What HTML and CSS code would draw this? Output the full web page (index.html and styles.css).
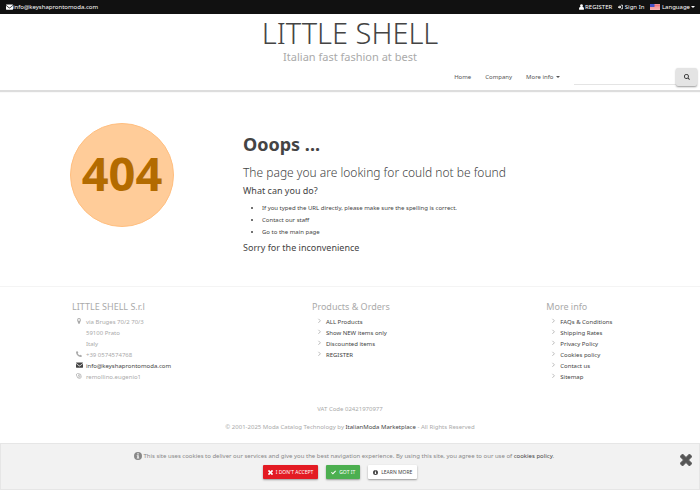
FILE: index.html
```html
<!DOCTYPE html>
<html lang="en">
<head>
    <meta charset="UTF-8">
    <meta name="viewport" content="width=device-width, initial-scale=1.0">
    <title>LITTLE SHELL - Page not found</title>
    <link rel="stylesheet" href="styles.css">
</head>
<body>
    <!-- shared icons -->
    <svg class="sprite" aria-hidden="true">
        <symbol id="envelope" viewBox="0 0 16 12"><path d="M1 0h14q1 0 1 1.200L8 7.500 0 1.200Q0 0 1 0zM0 3.200l8 6 8-6V11q0 1-1 1H1q-1 0-1-1z"/></symbol>
        <symbol id="user" viewBox="0 0 14 16"><path d="M7 0a4 4 0 0 1 2.600 7C12.500 7.500 14 10 14 13.500q0 2.500-2 2.500H2q-2 0-2-2.500C0 10 1.500 7.500 4.400 7A4 4 0 0 1 7 0z"/></symbol>
        <symbol id="signin" viewBox="0 0 16 14"><path d="M0 5h5V1.500L11 7l-6 5.500V9H0zM9 0h4q3 0 3 3v8q0 3-3 3H9v-2h4q1 0 1-1V3q0-1-1-1H9z"/></symbol>
        <symbol id="search" viewBox="0 0 16 16"><path fill-rule="evenodd" d="M6.500 0a6.500 6.500 0 0 1 5.300 10.200l4 4-1.700 1.700-4-4A6.500 6.500 0 1 1 6.500 0zm0 2.300a4.200 4.200 0 1 0 0 8.400 4.200 4.200 0 0 0 0-8.400z"/></symbol>
        <symbol id="marker" viewBox="0 0 10 16"><path fill-rule="evenodd" d="M5 0a5 5 0 0 1 5 5c0 2-1 3.500-4 11H4C1 8.500 0 7 0 5a5 5 0 0 1 5-5zm0 2.500a2.500 2.500 0 1 0 0 5 2.500 2.500 0 0 0 0-5z"/></symbol>
        <symbol id="phone" viewBox="0 0 14 14"><path d="M3 0l2.500 4L4 6q1.500 3 4 4l2-1.500 4 2.500q0 3-3.500 3C5 13 1 9 0 3.500Q0 0 3 0z"/></symbol>
        <symbol id="skype" viewBox="0 0 16 16"><path fill="none" stroke="currentColor" stroke-width="2" d="M2.500 8.500A4 4 0 0 1 7.500 2a6 6 0 0 1 6 6.500A4 4 0 0 1 8.500 14a6 6 0 0 1-6-5.500zM10.500 5.800Q8 4 6 5.500c-1 2 4.500 2 4.500 4C10 12 7 11.500 5.500 10"/></symbol>
        <symbol id="angle" viewBox="-3 -1 12 15"><path fill="none" stroke="currentColor" stroke-width="2" d="M1.500 1l5 5-5 5"/></symbol>
        <symbol id="info" viewBox="0 0 16 16"><path fill-rule="evenodd" d="M8 0a8 8 0 1 1 0 16A8 8 0 0 1 8 0zM6.500 2.500v2.500h3V2.500zM5.500 6.500v1.500h1v3.500h-1V13h5v-1.500h-1v-5z"/></symbol>
        <symbol id="times" viewBox="0 0 14 14"><path d="M3 0l4 4 4-4 3 3-4 4 4 4-3 3-4-4-4 4-3-3 4-4-4-4z" stroke="currentColor" stroke-linejoin="round"/></symbol>
        <symbol id="check" viewBox="0 0 16 13"><path d="M2.200 4.500L6 8.200 13.800 0 16 2.300 6 13 0 6.800z"/></symbol>
    </svg>

    <div class="topbar">
        <a class="topbar-mail" href="#"><svg class="icon icon-wide"><use href="#envelope"/></svg>info@keyshaprontomoda.com</a>
        <nav class="topbar-links">
            <a href="#"><svg class="icon icon-small"><use href="#user"/></svg> REGISTER</a>
            <a href="#"><svg class="icon icon-small"><use href="#signin"/></svg> Sign In</a>
            <a href="#">
                <svg class="flag" viewBox="0 0 20 12"><path fill="#fff" d="M0 0h20v12H0z"/><path stroke="#e8444e" stroke-width="1.500" d="M0 .6h20M0 3h20M0 5.400h20M0 7.800h20M0 10.200h20"/><path fill="#4450c8" d="M0 0h9v6H0z"/></svg>
                Language<span class="caret"></span>
            </a>
        </nav>
    </div>

    <header class="header">
        <h1 class="brand">LITTLE SHELL</h1>
        <p class="tagline">Italian fast fashion at best</p>
        <div class="navbar">
            <nav class="menu">
                <a href="#">Home</a>
                <a href="#">Company</a>
                <a href="#">More info <span class="caret"></span></a>
            </nav>
            <form class="search">
                <input type="text" class="search-input" aria-label="Search">
                <button type="button" class="search-button" aria-label="Search"><svg class="icon"><use href="#search"/></svg></button>
            </form>
        </div>
    </header>

    <main class="error">
        <div class="error-code">404</div>
        <div class="error-text">
            <h2>Ooops ...</h2>
            <h3>The page you are looking for could not be found</h3>
            <h4>What can you do?</h4>
            <ul>
                <li>If you typed the URL directly, please make sure the spelling is correct.</li>
                <li>Contact our staff</li>
                <li>Go to the main page</li>
            </ul>
            <h4>Sorry for the inconvenience</h4>
        </div>
    </main>

    <footer class="footer">
        <div class="footer-columns">
            <section>
                <h4>LITTLE SHELL S.r.l</h4>
                <ul>
                    <li><svg class="icon"><use href="#marker"/></svg>via Bruges 70/2 70/3<br>59100 Prato<br>Italy</li>
                    <li><svg class="icon"><use href="#phone"/></svg>+39 0574574768</li>
                    <li class="dark"><svg class="icon icon-wide"><use href="#envelope"/></svg><a href="#">info@keyshaprontomoda.com</a></li>
                    <li><svg class="icon"><use href="#skype"/></svg>remollino.eugenio1</li>
                </ul>
            </section>
            <section>
                <h4>Products &amp; Orders</h4>
                <ul>
                    <li><svg class="icon"><use href="#angle"/></svg><a href="#">ALL Products</a></li>
                    <li><svg class="icon"><use href="#angle"/></svg><a href="#">Show NEW items only</a></li>
                    <li><svg class="icon"><use href="#angle"/></svg><a href="#">Discounted items</a></li>
                    <li><svg class="icon"><use href="#angle"/></svg><a href="#">REGISTER</a></li>
                </ul>
            </section>
            <section>
                <h4>More info</h4>
                <ul>
                    <li><svg class="icon"><use href="#angle"/></svg><a href="#">FAQs &amp; Conditions</a></li>
                    <li><svg class="icon"><use href="#angle"/></svg><a href="#">Shipping Rates</a></li>
                    <li><svg class="icon"><use href="#angle"/></svg><a href="#">Privacy Policy</a></li>
                    <li><svg class="icon"><use href="#angle"/></svg><a href="#">Cookies policy</a></li>
                    <li><svg class="icon"><use href="#angle"/></svg><a href="#">Contact us</a></li>
                    <li><svg class="icon"><use href="#angle"/></svg><a href="#">Sitemap</a></li>
                </ul>
            </section>
        </div>
        <p>VAT Code 02421970977</p>
        <p>© 2001-2025 Moda Catalog Technology by <a href="#">ItalianModa Marketplace</a> - All Rights Reserved</p>
    </footer>

    <div class="cookies">
        <div class="cookies-body">
            <p><svg class="icon icon-info"><use href="#info"/></svg> This site uses cookies to deliver our services and give you the best navigation experience. By using this site, you agree to our use of <a href="#">cookies policy</a>.</p>
            <div class="cookies-buttons">
                <button type="button" class="btn btn-red"><svg class="icon"><use href="#times"/></svg>I DON'T ACCEPT</button>
                <button type="button" class="btn btn-green"><svg class="icon"><use href="#check"/></svg>GOT IT</button>
                <button type="button" class="btn"><svg class="icon"><use href="#info"/></svg>LEARN MORE</button>
            </div>
        </div>
        <button type="button" class="cookies-close" aria-label="Close"><svg><use href="#times"/></svg></button>
    </div>
</body>
</html>
```
FILE: styles.css
```css
* {
    box-sizing: border-box;
}
body {
    margin: 0;
    background-color: #fff;
    color: #444;
    font-family: "Noto Sans", sans-serif;
    font-size: 6px;
    line-height: 11px;
}
h1, h2, h3, h4, p, ul {
    margin: 0;
    padding: 0;
    font-weight: 400;
}
a {
    color: #444;
    text-decoration: none;
}
button {
    border: none;
    padding: 0;
    font-family: inherit;
    cursor: pointer;
}
.sprite {
    display: none;
}
.icon {
    width: 6px;
    height: 6px;
    fill: currentColor;
    vertical-align: -1px;
}
.icon-wide {
    width: 7px;
}
.icon-small {
    width: 5px;
}
.caret {
    display: inline-block;
    margin-left: 1px;
    border: 2px solid transparent;
    border-top-color: currentColor;
    border-bottom: none;
    vertical-align: 1px;
}

/* top bar */
.topbar {
    display: flex;
    justify-content: space-between;
    height: 14px;
    padding: 0 5px 0 6px;
    background-color: #111;
    line-height: 14px;
}
.topbar a {
    color: #fff;
}
.topbar-links {
    display: flex;
    gap: 6px;
}
.flag {
    width: 10px;
    height: 6px;
    vertical-align: -1px;
}

/* header */
.header {
    border-bottom: 1px solid #ddd;
    box-shadow: 0 1px 1px #ddd;
    text-align: center;
}
.brand {
    font-size: 29px;
    line-height: 37px;
    font-weight: 300;
}
.tagline {
    color: #aaa;
    font-size: 11px;
    line-height: 12px;
}
.navbar {
    display: flex;
    justify-content: flex-end;
    align-items: center;
    gap: 14px;
    padding: 5px 3px 4px;
}
.menu {
    display: flex;
    gap: 14px;
}
.menu a {
    color: #555;
}
.search {
    display: flex;
}
.search-input {
    width: 102px;
    height: 17px;
    border: none;
    border-bottom: 1px solid #e4e4e4;
    outline: none;
}
.search-button {
    display: flex;
    justify-content: center;
    align-items: center;
    width: 21px;
    height: 18px;
    border-radius: 2px;
    background-color: #e4e4e4;
    box-shadow: 0 1px 2px #999;
    color: #333;
}

/* error message */
.error {
    display: flex;
    align-items: flex-start;
    gap: 69px;
    padding: 32px 10% 30px;
    border-bottom: 1px solid #f4f4f4;
}
.error-code {
    flex: none;
    width: 104px;
    height: 104px;
    border: 1px solid #ffbf80;
    border-radius: 50%;
    background-color: #ffcc99;
    color: #b36b00;
    font-size: 47px;
    line-height: 98px;
    font-weight: 700;
    text-align: center;
}
.error-text {
    padding-top: 8px;
}
.error-text h2 {
    font-size: 18px;
    line-height: 26px;
    font-weight: 700;
}
.error-text h3 {
    padding-top: 6px;
    font-size: 12px;
    line-height: 20px;
    font-weight: 300;
}
.error-text h4 {
    font-size: 9px;
    line-height: 16px;
}
.error-text ul {
    padding: 3px 0 2px 19px;
    line-height: 12px;
}

/* footer */
.footer {
    padding-bottom: 56px;
    color: #aaa;
    text-align: center;
}
.footer-columns {
    display: grid;
    grid-template-columns: 43% 42% auto;
    padding: 12px 10% 17px 72px;
    text-align: left;
}
.footer h4 {
    padding-bottom: 2px;
    font-size: 9px;
    line-height: 16px;
}
.footer ul {
    padding-left: 14px;
    list-style: none;
}
.footer li .icon {
    margin: 0 4px 0 -10px;
    vertical-align: 0;
}
.footer li .icon-wide {
    margin-right: 3px;
}
.dark {
    color: #444;
}
.footer p {
    line-height: 18px;
}

/* cookie notice */
.cookies {
    position: fixed;
    right: 0;
    bottom: 0;
    left: 0;
    display: flex;
    align-items: flex-start;
    padding: 7px 7px 10px;
    border: 1px solid #e6e6e6;
    background-color: #f2f2f2;
    color: #888;
    text-align: center;
}
.cookies-body {
    flex: 1;
}
.icon-info {
    width: 8px;
    height: 8px;
    vertical-align: -2px;
}
.cookies-buttons {
    display: flex;
    justify-content: center;
    gap: 8px;
    padding: 3px 8px 0 0;
}
.btn {
    padding: 0 5px;
    border-radius: 1px;
    background-color: #fff;
    box-shadow: 0 1px 2px #999;
    color: #444;
    font-size: 5px;
    line-height: 14px;
}
.btn .icon {
    width: 5px;
    height: 5px;
    margin-right: 3px;
}
.btn-red {
    background-color: #e31b23;
    color: #fff;
}
.btn-green {
    background-color: #4caf50;
    color: #fff;
}
.cookies-close {
    width: 12px;
    height: 12px;
    margin-top: 3px;
    background: none;
    color: #555;
}
.cookies-close svg {
    display: block;
    width: 12px;
    height: 12px;
    fill: currentColor;
}
```
